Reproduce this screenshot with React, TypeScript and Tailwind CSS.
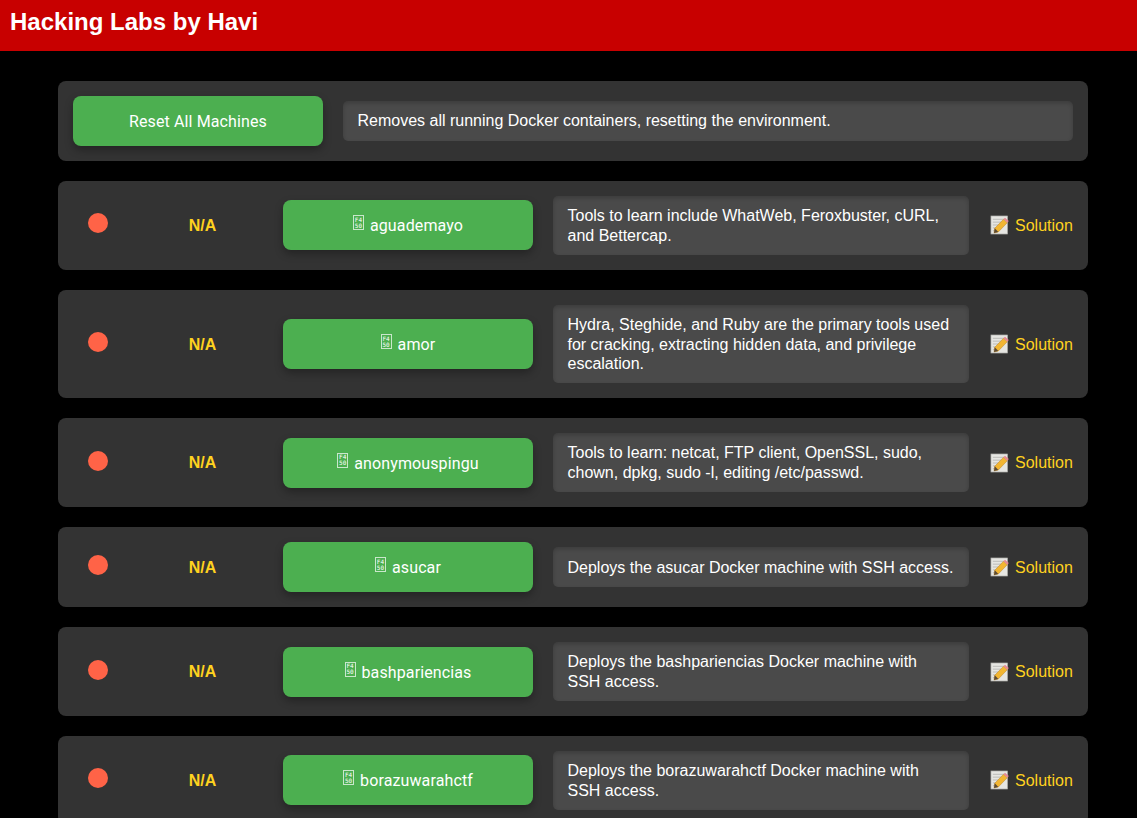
const machines = [
  { name: "aguademayo", info: "Tools to learn include WhatWeb, Feroxbuster, cURL, and Bettercap." },
  { name: "amor", info: "Hydra, Steghide, and Ruby are the primary tools used for cracking, extracting hidden data, and privilege escalation." },
  { name: "anonymouspingu", info: "Tools to learn: netcat, FTP client, OpenSSL, sudo, chown, dpkg, sudo -l, editing /etc/passwd." },
  { name: "asucar", info: "Deploys the asucar Docker machine with SSH access." },
  { name: "bashpariencias", info: "Deploys the bashpariencias Docker machine with SSH access." },
  { name: "borazuwarahctf", info: "Deploys the borazuwarahctf Docker machine with SSH access." },
];

const buttonClass =
  "flex w-[250px] h-[50px] shrink-0 items-center justify-center rounded-lg bg-[#4caf50] pt-[2px] text-white text-base tracking-[0.12px] shadow-[0_4px_8px_rgba(0,0,0,0.3)] font-['Roboto',sans-serif]";

const infoClass =
  "flex-1 rounded-[5px] bg-[#4a4a4a] pl-[14.5px] pr-[15px] pt-[10.2px] pb-[9.8px] text-base leading-[19.45px] text-white shadow-[inset_0_2px_4px_rgba(0,0,0,0.2)]";

function MissingGlyph() {
  return (
    <span className="mr-[6px] mb-[7px] flex h-[15px] w-[11px] flex-col items-center justify-center border border-white/70 font-['DejaVu_Sans_Mono',monospace] text-[6px] leading-[6px] tracking-normal text-white">
      <span>F4</span>
      <span>50</span>
    </span>
  );
}

function MemoIcon() {
  return (
    <svg viewBox="0 0 20 20" className="mr-[6px] h-[20px] w-[19px] shrink-0">
      <rect x="1" y="0.5" width="17.5" height="19" fill="#e6e6e2" stroke="#a8a8a4" strokeWidth="0.7" />
      <path d="M3 4h13M3 7h13M3 10h9M3 13h5M3 16h3" stroke="#b4b4b0" strokeWidth="0.9" />
      <path d="M5 13.5 14.2 4l4 3.6-9.4 9.7-4.6 1.2z" fill="#f2b632" stroke="#b9822a" strokeWidth="0.5" />
      <path d="M14.2 4l1.6-1.7 4 3.6-1.6 1.7z" fill="#e58a94" />
      <path d="M5 13.5l3.8 3.8-4.6 1.2z" fill="#5a4a36" />
    </svg>
  );
}

function MachineRow({ name, info }: { name: string; info: string }) {
  return (
    <div className="flex items-center rounded-lg bg-[#333333] p-[15px]">
      <span className="mb-[4px] ml-[15px] size-5 shrink-0 rounded-full bg-[#ff6347]" />
      <span className="w-[175px] shrink-0 pt-[1px] pl-[14px] text-center text-base font-bold text-[#ffd21f]">N/A</span>
      <button className={buttonClass}>
        <MissingGlyph />
        {name}
      </button>
      <p className={`ml-5 ${infoClass}`}>{info}</p>
      <a className="ml-[21px] flex w-[83px] shrink-0 items-center text-base text-[#ffd21f]">
        <MemoIcon />
        <span className="pt-[1px]">Solution</span>
      </a>
    </div>
  );
}

export default function App() {
  return (
    <div className="min-h-screen bg-black font-['Liberation_Sans',Arial,sans-serif]">
      <header className="h-[51px] bg-[#c80000] px-[10px] py-[7px]">
        <h1 className="text-2xl leading-[30px] font-bold text-white">Hacking Labs by Havi</h1>
      </header>
      <main className="ml-[58px] flex w-[1030px] flex-col gap-5 pt-[30px] pb-5">
        <div className="flex items-center gap-5 rounded-lg bg-[#333333] p-[15px]">
          <button className={buttonClass}>Reset All Machines</button>
          <p className={infoClass}>Removes all running Docker containers, resetting the environment.</p>
        </div>
        {machines.map((m) => (
          <MachineRow key={m.name} name={m.name} info={m.info} />
        ))}
      </main>
    </div>
  );
}
